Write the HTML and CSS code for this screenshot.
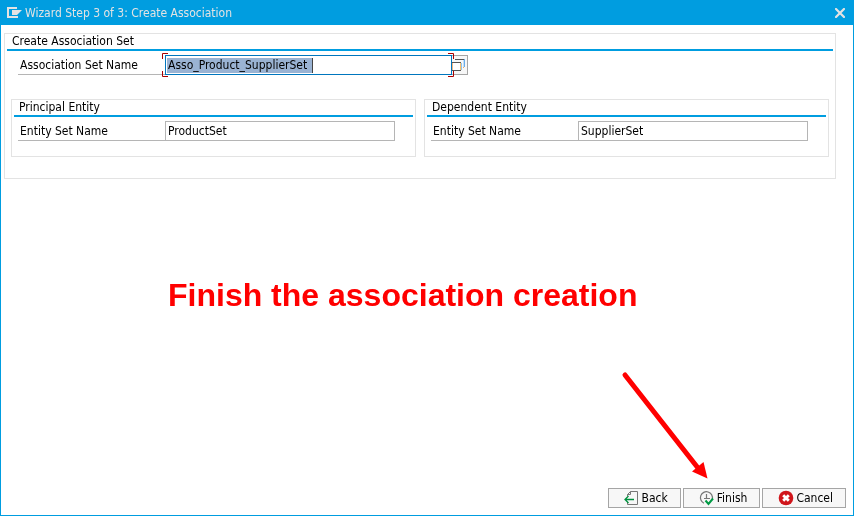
FILE: index.html
```html
<!DOCTYPE html>
<html lang="en">
<head>
<meta charset="utf-8">
<meta name="viewport" content="width=device-width, initial-scale=1">
<title>Wizard Step 3 of 3: Create Association</title>
<link rel="stylesheet" href="styles.css">
</head>
<body>
<div class="dialog">
  <header class="titlebar">
    <svg class="titlebar-icon" width="15" height="12" viewBox="0 0 15 12" aria-hidden="true">
      <path d="M10 1H1V10H10V9" fill="none" stroke="#e3e3e3" stroke-width="2"/>
      <path d="M5 3H15L10 8H5Z" fill="#e3e3e3"/>
    </svg>
    <h1 class="title">Wizard Step 3 of 3: Create Association</h1>
    <button class="close" type="button" aria-label="Close">
      <svg width="10" height="10" viewBox="0 0 10 10" aria-hidden="true">
        <path d="M1 1L9 9M9 1L1 9" stroke="#e3e3e3" stroke-width="2.2" stroke-linecap="square"/>
      </svg>
    </button>
  </header>

  <main class="content">
    <section class="group">
      <h2 class="group-title">Create Association Set</h2>
      <div class="row row-main">
        <label class="label" for="assoc-set">Association Set Name</label>
        <div class="focus-field">
          <input class="field field-wide" id="assoc-set" type="text" value="Asso_Product_SupplierSet">
          <span class="selection" aria-hidden="true"></span>
          <svg class="corner corner-left" width="6" height="24" viewBox="0 0 6 24" aria-hidden="true">
            <path d="M6 .5H.5V6M.5 18V23.5H6" fill="none" stroke="#a80000"/>
          </svg>
          <svg class="corner corner-right" width="6" height="24" viewBox="0 0 6 24" aria-hidden="true">
            <path d="M0 .5H5.500V6M5.500 18V23.500H0" fill="none" stroke="#a80000"/>
          </svg>
        </div>
        <button class="value-help" type="button" aria-label="Value help">
          <svg width="14" height="14" viewBox="0 0 14 14" aria-hidden="true">
            <path d="M3 1.500H12" stroke="#555"/>
            <path d="M12.500 1V9" stroke="#6aaeea"/>
            <path d="M11.500 2V10" stroke="#c3def5"/>
            <path d="M11 9.500H12" stroke="#f0ab60"/>
            <path d="M0 4H9V13H0Z" fill="#fff"/>
            <path d="M.5 4V12" stroke="#f3b47e"/>
            <path d="M0 4.500H9M0 12.500H9" stroke="#555"/>
            <path d="M8.500 5V12" stroke="#f6c070"/>
            <path d="M9.500 5V12" stroke="#8dc2ec"/>
          </svg>
        </button>
      </div>

      <div class="entities">
        <section class="group">
          <h3 class="group-title">Principal Entity</h3>
          <div class="row">
            <label class="label" for="principal-set">Entity Set Name</label>
            <input class="field" id="principal-set" type="text" value="ProductSet">
          </div>
        </section>
        <section class="group">
          <h3 class="group-title">Dependent Entity</h3>
          <div class="row">
            <label class="label" for="dependent-set">Entity Set Name</label>
            <input class="field" id="dependent-set" type="text" value="SupplierSet">
          </div>
        </section>
      </div>
    </section>
  </main>

  <footer class="actions">
    <button class="action" type="button">
      <svg width="16" height="16" viewBox="0 0 16 16" aria-hidden="true">
        <path d="M3.500 6V4.500L6.500 1.500H13.500V14.500H3.500V12M6.500 1.500V4.500H3.500" fill="none" stroke="#777"/>
        <path d="M1 9.500H10M4.500 6L1 9.500L4.500 13" fill="none" stroke="#00903e" stroke-width="1.300"/>
      </svg>
      Back
    </button>
    <button class="action" type="button">
      <svg width="16" height="16" viewBox="0 0 16 16" aria-hidden="true">
        <path d="M5 13.200A6 6 0 1 1 13.300 9" fill="none" stroke="#777" stroke-width="1.200"/>
        <path d="M7.500 4V8.500M5 8.500H11" fill="none" stroke="#777" stroke-width="1.200"/>
        <path d="M6.500 10.500L9.500 14L14 8.500" fill="none" stroke="#009a44" stroke-width="2"/>
      </svg>
      Finish
    </button>
    <button class="action" type="button">
      <svg width="16" height="16" viewBox="0 0 16 16" aria-hidden="true">
        <circle cx="8" cy="8" r="7.300" fill="#d0151b"/>
        <path d="M5.200 5.200L10.800 10.800M10.800 5.200L5.200 10.800" stroke="#fff" stroke-width="2.800"/>
      </svg>
      Cancel
    </button>
  </footer>

  <p class="note">Finish the association creation</p>
  <svg class="note-arrow" width="88" height="108" viewBox="0 0 88 108" aria-hidden="true">
    <path d="M5 4L78 97" stroke="#f00" stroke-width="5" stroke-linecap="round"/>
    <path d="M87.500 107.500L72 100.500L83.500 91Z" fill="#f00"/>
  </svg>
</div>
</body>
</html>
```
FILE: styles.css
```css
* {
  box-sizing: border-box;
}

body {
  margin: 0;
  background: #fff;
  color: #000;
}

body,
input,
button {
  font: 12px/16px "DejaVu Sans Condensed", "DejaVu Sans", sans-serif;
}

h1,
h2,
h3 {
  margin: 0;
  font: inherit;
}

.dialog {
  position: relative;
  display: flex;
  flex-direction: column;
  min-height: 100vh;
  border: 1px solid #009de0;
  border-top: 0;
}

.titlebar {
  display: flex;
  align-items: center;
  height: 25px;
  padding: 0 8px 0 6px;
  background: #009de0;
  color: #e3e3e3;
}

.title {
  flex: 1;
  margin-left: 3px;
}

.close {
  display: flex;
  padding: 0;
  border: 0;
  background: none;
}

.content {
  flex: 1;
  padding: 8px 17px 8px 3px;
}

.group {
  padding: 0 2px 15px;
  border: 1px solid #e3e3e3;
}

.group-title {
  padding: 0 5px;
  border-bottom: 2px solid #009de0;
  line-height: 15px;
}

.row {
  display: flex;
  height: 20px;
  margin: 4px 0 0 4px;
}

.row-main {
  margin-left: 11px;
}

.label {
  width: 147px;
  padding: 2px 2px 0;
  border-bottom: 1px solid #b5b5b5;
}

.field {
  width: 230px;
  height: 20px;
  padding: 0 2px;
  border: 1px solid #b5b5b5;
  border-radius: 0;
  background: #fff;
  color: #000;
}

.focus-field {
  position: relative;
}

.field-wide {
  display: block;
  width: 287px;
  border-color: #0076be;
}

.selection {
  position: absolute;
  top: 3px;
  left: 2px;
  width: 146px;
  height: 15px;
  border-right: 1px solid #444;
  background: #9ab3d3;
  mix-blend-mode: multiply;
}

.corner {
  position: absolute;
  top: -2px;
}

.corner-left {
  left: -3px;
}

.corner-right {
  right: -2px;
}

.value-help {
  display: flex;
  align-items: center;
  width: 16px;
  padding: 0;
  border: 1px solid #a5a5a5;
  border-left: 0;
  background: #f7f7f7;
}

.entities {
  display: grid;
  grid-template-columns: 1fr 1fr;
  gap: 8px;
  margin: 24px 4px 6px;
}

.actions {
  display: flex;
  justify-content: flex-end;
  gap: 2px;
  padding: 0 7px 7px;
}

.action {
  display: flex;
  align-items: center;
  gap: 2px;
  height: 20px;
  padding: 0 12px 0 15px;
  border: 1px solid #a5a5a5;
  background: #f7f7f7;
  color: #000;
}

.note {
  position: absolute;
  top: 277px;
  left: 167px;
  margin: 0;
  color: #f00;
  font: bold 32px/36px "Liberation Sans", Arial, sans-serif;
}

.note-arrow {
  position: absolute;
  top: 371px;
  left: 619px;
}
```
